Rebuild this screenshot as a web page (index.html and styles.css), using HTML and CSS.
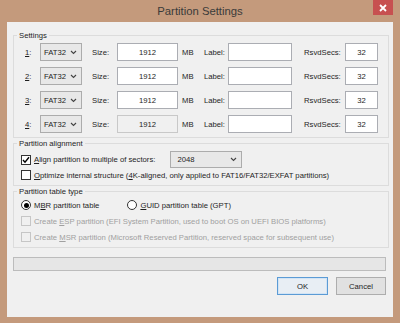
FILE: index.html
```html
<!DOCTYPE html>
<html>
<head>
<meta charset="utf-8">
<title>Partition Settings</title>
<link rel="stylesheet" href="styles.css">
</head>
<body>
<div class="window">
  <div class="titlebar">
    <span class="title">Partition Settings</span>
    <div class="close">
      <svg width="8" height="8" viewBox="0 0 8 8"><path d="M1 1 L7 7 M7 1 L1 7" stroke="#fff" stroke-width="1.8" fill="none"/></svg>
    </div>
  </div>
  <div class="client">
    <fieldset class="group settings">
      <legend>Settings</legend>
      <div class="rows">
        <div class="row">
          <span class="num"><u>1</u>:</span>
          <div class="combo"><span>FAT32</span><svg width="7" height="5" viewBox="0 0 7 5"><path d="M1 1 L3.5 3.5 L6 1" stroke="#444" stroke-width="1.1" fill="none"/></svg></div>
          <span class="lbl lsize">Size:</span>
          <div class="edit center">1912</div>
          <span class="lbl lmb">MB</span>
          <span class="lbl">Label:</span>
          <div class="edit"></div>
          <span class="lbl lrs">RsvdSecs:</span>
          <div class="edit center">32</div>
        </div>
        <div class="row">
          <span class="num"><u>2</u>:</span>
          <div class="combo"><span>FAT32</span><svg width="7" height="5" viewBox="0 0 7 5"><path d="M1 1 L3.5 3.5 L6 1" stroke="#444" stroke-width="1.1" fill="none"/></svg></div>
          <span class="lbl lsize">Size:</span>
          <div class="edit center">1912</div>
          <span class="lbl lmb">MB</span>
          <span class="lbl">Label:</span>
          <div class="edit"></div>
          <span class="lbl lrs">RsvdSecs:</span>
          <div class="edit center">32</div>
        </div>
        <div class="row">
          <span class="num"><u>3</u>:</span>
          <div class="combo"><span>FAT32</span><svg width="7" height="5" viewBox="0 0 7 5"><path d="M1 1 L3.5 3.5 L6 1" stroke="#444" stroke-width="1.1" fill="none"/></svg></div>
          <span class="lbl lsize">Size:</span>
          <div class="edit center">1912</div>
          <span class="lbl lmb">MB</span>
          <span class="lbl">Label:</span>
          <div class="edit"></div>
          <span class="lbl lrs">RsvdSecs:</span>
          <div class="edit center">32</div>
        </div>
        <div class="row">
          <span class="num"><u>4</u>:</span>
          <div class="combo"><span>FAT32</span><svg width="7" height="5" viewBox="0 0 7 5"><path d="M1 1 L3.5 3.5 L6 1" stroke="#444" stroke-width="1.1" fill="none"/></svg></div>
          <span class="lbl lsize">Size:</span>
          <div class="edit center readonly">1912</div>
          <span class="lbl lmb">MB</span>
          <span class="lbl">Label:</span>
          <div class="edit"></div>
          <span class="lbl lrs">RsvdSecs:</span>
          <div class="edit center">32</div>
        </div>
      </div>
    </fieldset>

    <fieldset class="group align">
      <legend>Partition alignment</legend>
      <div class="opt opt-align">
        <span class="check checked"><svg width="8" height="8" viewBox="0 0 8 8"><path d="M1 4 L3 6.2 L7 1.2" stroke="#000" stroke-width="1.4" fill="none"/></svg></span>
        <span class="otext"><u>A</u>lign partition to multiple of sectors:</span>
        <div class="combo wide"><span>2048</span><svg width="7" height="5" viewBox="0 0 7 5"><path d="M1 1 L3.5 3.5 L6 1" stroke="#444" stroke-width="1.1" fill="none"/></svg></div>
      </div>
      <div class="opt">
        <span class="check"></span>
        <span class="otext"><u>O</u>ptimize internal structure (<u>4</u>K-aligned, only applied to FAT16/FAT32/EXFAT partitions)</span>
      </div>
    </fieldset>

    <fieldset class="group ptype">
      <legend>Partition table type</legend>
      <div class="opt">
        <span class="radio checked"><span class="dot"></span></span>
        <span class="otext">M<u>B</u>R partition table</span>
        <span class="radio r2"></span>
        <span class="otext"><u>G</u>UID partition table (GPT)</span>
      </div>
      <div class="opt disabled">
        <span class="check"></span>
        <span class="otext">Create <u>E</u>SP partition (EFI System Partition, used to boot OS on UEFI BIOS platforms)</span>
      </div>
      <div class="opt disabled">
        <span class="check"></span>
        <span class="otext">Create <u>M</u>SR partition (Microsoft Reserved Partition, reserved space for subsequent use)</span>
      </div>
    </fieldset>

    <div class="progress"></div>

    <div class="buttons">
      <div class="btn default">OK</div>
      <div class="btn">Cancel</div>
    </div>
  </div>
</div>
</body>
</html>
```

FILE: styles.css
```css
html, body {
  margin: 0;
  padding: 0;
}
body {
  background: #c49a7c;
  font-family: "Liberation Sans", Arial, sans-serif;
}
.window {
  width: 400px;
  height: 323px;
  box-sizing: border-box;
  padding: 0 7px 6px;
  display: flex;
  flex-direction: column;
}
.titlebar {
  height: 22px;
  flex: none;
  position: relative;
  display: flex;
  align-items: center;
  justify-content: center;
}
.title {
  font-size: 11.3px;
  color: #3a3a3a;
  margin-top: -1px;
}
.close {
  position: absolute;
  top: 0;
  right: 0;
  width: 20px;
  height: 15px;
  background: #c75050;
  display: flex;
  align-items: center;
  justify-content: center;
}
.client {
  flex: 1;
  min-height: 0;
  background: #f0f0f0;
  padding: 8px 4px 0 6px;
  font-size: 7.7px;
  color: #1e1e1e;
  display: flex;
  flex-direction: column;
}
fieldset.group {
  margin: 0;
  padding: 2px 0 4px;
  border: 1px solid #dcdcdc;
  min-width: 0;
  flex: none;
}
legend {
  margin-left: 3px;
  padding: 0 2px;
  font-size: 7.7px;
  line-height: 11px;
}
.rows {
  display: flex;
  flex-direction: column;
  gap: 6px;
  padding-left: 11px;
}
.row {
  height: 18px;
  display: grid;
  grid-template-columns: 15px 42px 35px 61px 26px 24px 64px 53px 33px;
  align-items: center;
}
.lsize { padding-left: 10px; }
.lmb { padding-left: 4px; }
.lrs { padding-left: 12px; }
.combo {
  height: 18px;
  box-sizing: border-box;
  border: 1px solid #acacac;
  background: #e8e8e8;
  display: flex;
  align-items: center;
  justify-content: space-between;
  padding: 0 4px 0 3px;
}
.edit {
  height: 18px;
  box-sizing: border-box;
  border: 1px solid #abadb3;
  background: #fff;
  display: flex;
  align-items: center;
}
.edit.center { justify-content: center; }
.edit.readonly {
  background: #f0f0f0;
  border-color: #c8c8c8;
}
.align {
  margin-top: 6px;
  padding: 4px 0 7px;
}
.opt {
  display: flex;
  align-items: center;
  height: 12px;
  padding-left: 7px;
}
.opt-align {
  height: 17px;
  margin-bottom: 1px;
}
.check, .radio {
  width: 10px;
  height: 10px;
  box-sizing: border-box;
  border: 1px solid #333;
  background: #fff;
  margin-right: 3px;
  display: flex;
  align-items: center;
  justify-content: center;
  flex: none;
}
.radio {
  border-radius: 50%;
}
.radio .dot {
  width: 5px;
  height: 5px;
  border-radius: 50%;
  background: #000;
}
.radio.r2 {
  margin-left: 28px;
}
.combo.wide {
  width: 72px;
  height: 17px;
  margin-left: 15px;
  padding-left: 6px;
}
.ptype {
  margin-top: 5px;
  padding: 3px 0 2px;
  display: flex;
  flex-direction: column;
  gap: 4px;
}
.disabled {
  color: #a0a0a0;
}
.disabled .check {
  border-color: #c6c6c6;
  background: #f0f0f0;
}
.progress {
  margin: 9px 3px 0 0;
  height: 14px;
  flex: none;
  box-sizing: border-box;
  border: 1px solid #bcbcbc;
  background: #e6e6e6;
}
.buttons {
  margin: 6px 3px 0 0;
  display: flex;
  justify-content: flex-end;
  gap: 8px;
}
.btn {
  width: 50px;
  height: 18px;
  box-sizing: border-box;
  border: 1px solid #adadad;
  background: #e1e1e1;
  display: flex;
  align-items: center;
  justify-content: center;
}
.btn.default {
  width: 51px;
  border-color: #5b9bd5;
  background: #e8eef4;
  box-shadow: inset 0 0 0 1px #d2e4f5;
}
```
